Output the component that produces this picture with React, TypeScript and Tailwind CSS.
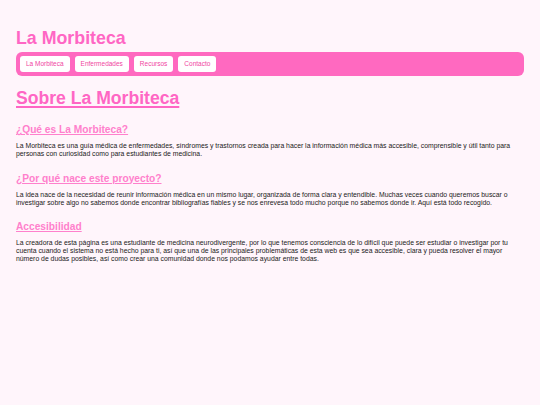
export default function App() {
  const links = ['La Morbiteca', 'Enfermedades', 'Recursos', 'Contacto'];

  return (
    <div className="min-h-[405px] bg-[#fff5fb] px-4 pt-[28px] pb-8 font-['Liberation_Sans',Arial,sans-serif] text-[#1a1a1a]">
      <header>
        <h1 className="text-[17.8px] leading-[20px] font-bold text-[#ff66c4]">La Morbiteca</h1>
        <nav className="mt-1 flex gap-[5px] rounded-[6px] bg-[#ff69c0] p-1">
          {links.map((l) => (
            <a
              key={l}
              href="#"
              className="flex h-4 items-center rounded-[3px] bg-white px-[6px] text-[6.5px] text-[#f0459f]"
            >
              {l}
            </a>
          ))}
        </nav>
      </header>

      <main>
        <h1 className="mt-3 text-[17.6px] leading-[20px] font-bold text-[#ff66c4] underline decoration-[1.5px] underline-offset-2">
          Sobre La Morbiteca
        </h1>

        <section>
          <h2 className="mt-[16px] text-[10.2px] leading-[12px] font-bold text-[#ff80cc] underline underline-offset-1">
            ¿Qué es La Morbiteca?
          </h2>
          <p className="mt-[6px] text-[6.85px] leading-[8px]">
            La Morbiteca es una guía médica de enfermedades, síndromes y trastornos creada para hacer la información médica más accesible, comprensible y útil tanto para personas con curiosidad como para estudiantes de medicina.
          </p>
        </section>

        <section>
          <h2 className="mt-[14.5px] text-[10.2px] leading-[12px] font-bold text-[#ff80cc] underline underline-offset-1">
            ¿Por qué nace este proyecto?
          </h2>
          <p className="mt-[6px] text-[6.85px] leading-[8px]">
            La idea nace de la necesidad de reunir información médica en un mismo lugar, organizada de forma clara y entendible. Muchas veces cuando queremos buscar o investigar sobre algo no sabemos donde encontrar bibliografías fiables y se nos enrevesa todo mucho porque no sabemos donde ir. Aquí está todo recogido.
          </p>
        </section>

        <section>
          <h2 className="mt-[14.5px] text-[10.2px] leading-[12px] font-bold text-[#ff80cc] underline underline-offset-1">
            Accesibilidad
          </h2>
          <p className="mt-[6px] text-[6.85px] leading-[8px]">
            La creadora de esta página es una estudiante de medicina neurodivergente, por lo que tenemos consciencia de lo difícil que puede ser estudiar o investigar por tu cuenta cuando el sistema no está hecho para ti, así que una de las principales problemáticas de esta web es que sea accesible, clara y pueda resolver el mayor número de dudas posibles, así como crear una comunidad donde nos podamos ayudar entre todas.
          </p>
        </section>
      </main>
    </div>
  );
}
